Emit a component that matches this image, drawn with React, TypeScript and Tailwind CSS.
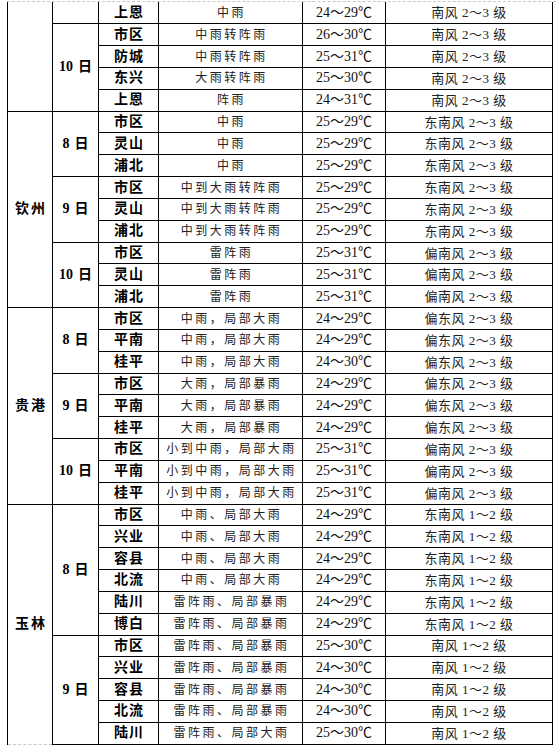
import React from "react"

type Row = [string, string, string, string]
type Day = { date: string; rows: Row[] }
type City = { name: string; days: Day[]; last?: boolean }

const wind23 = (d: string) => `${d}风 2～3 级`
const wind12 = (d: string) => `${d}风 1～2 级`

const cities: City[] = [
  {
    name: "",
    days: [
      { date: "", rows: [["上恩", "中雨", "24～29℃", wind23("南")]] },
      {
        date: "10",
        rows: [
          ["市区", "中雨转阵雨", "26～30℃", wind23("南")],
          ["防城", "中雨转阵雨", "25～31℃", wind23("南")],
          ["东兴", "大雨转阵雨", "25～30℃", wind23("南")],
          ["上恩", "阵雨", "24～31℃", wind23("南")],
        ],
      },
    ],
  },
  {
    name: "钦州",
    days: [
      {
        date: "8",
        rows: [
          ["市区", "中雨", "25～29℃", wind23("东南")],
          ["灵山", "中雨", "25～29℃", wind23("东南")],
          ["浦北", "中雨", "25～29℃", wind23("东南")],
        ],
      },
      {
        date: "9",
        rows: [
          ["市区", "中到大雨转阵雨", "25～29℃", wind23("东南")],
          ["灵山", "中到大雨转阵雨", "25～29℃", wind23("东南")],
          ["浦北", "中到大雨转阵雨", "25～29℃", wind23("东南")],
        ],
      },
      {
        date: "10",
        rows: [
          ["市区", "雷阵雨", "25～31℃", wind23("偏南")],
          ["灵山", "雷阵雨", "25～31℃", wind23("偏南")],
          ["浦北", "雷阵雨", "25～31℃", wind23("偏南")],
        ],
      },
    ],
  },
  {
    name: "贵港",
    days: [
      {
        date: "8",
        rows: [
          ["市区", "中雨，局部大雨", "24～29℃", wind23("偏东")],
          ["平南", "中雨，局部大雨", "24～29℃", wind23("偏东")],
          ["桂平", "中雨，局部大雨", "24～30℃", wind23("偏东")],
        ],
      },
      {
        date: "9",
        rows: [
          ["市区", "大雨，局部暴雨", "24～29℃", wind23("偏东")],
          ["平南", "大雨，局部暴雨", "24～29℃", wind23("偏东")],
          ["桂平", "大雨，局部暴雨", "24～29℃", wind23("偏东")],
        ],
      },
      {
        date: "10",
        rows: [
          ["市区", "小到中雨，局部大雨", "25～31℃", wind23("偏南")],
          ["平南", "小到中雨，局部大雨", "25～31℃", wind23("偏南")],
          ["桂平", "小到中雨，局部大雨", "25～31℃", wind23("偏南")],
        ],
      },
    ],
  },
  {
    name: "玉林",
    last: true,
    days: [
      {
        date: "8",
        rows: [
          ["市区", "中雨、局部大雨", "24～29℃", wind12("东南")],
          ["兴业", "中雨、局部大雨", "24～29℃", wind12("东南")],
          ["容县", "中雨、局部大雨", "24～29℃", wind12("东南")],
          ["北流", "中雨、局部大雨", "24～29℃", wind12("东南")],
          ["陆川", "雷阵雨、局部暴雨", "24～29℃", wind12("东南")],
          ["博白", "雷阵雨、局部暴雨", "24～29℃", wind12("东南")],
        ],
      },
      {
        date: "9",
        rows: [
          ["市区", "雷阵雨、局部暴雨", "25～30℃", wind12("南")],
          ["兴业", "雷阵雨、局部暴雨", "24～30℃", wind12("南")],
          ["容县", "雷阵雨、局部暴雨", "24～30℃", wind12("南")],
          ["北流", "雷阵雨、局部暴雨", "24～30℃", wind12("南")],
          ["陆川", "雷阵雨、局部大雨", "25～30℃", wind12("南")],
        ],
      },
    ],
  },
]

const cell = "border border-black p-0 text-center align-middle leading-none"
const bold = "font-bold text-[14px] text-black"

export default function App() {
  let first = true
  const trs: React.ReactNode[] = []

  cities.forEach((city, ci) => {
    const total = city.days.reduce((n, d) => n + d.rows.length, 0)
    city.days.forEach((day, di) => {
      day.rows.forEach((r, ri) => {
        const top = first ? "border-t-0" : ""
        trs.push(
          <tr key={`${ci}-${di}-${ri}`} className="h-[21.83px]">
            {di === 0 && ri === 0 && (
              <td
                rowSpan={total}
                className={`${cell} ${bold} ${top} tracking-[2px] pl-[2px] ${
                  city.last ? "border-b-[#c8c8c8] [border-bottom-style:dashed]" : ""
                }`}
              >
                {city.name}
              </td>
            )}
            {ri === 0 && (
              <td rowSpan={day.rows.length} className={`${cell} ${bold} ${top}`}>
                {day.date && (
                  <>
                    <span>{day.date}</span>
                    <span className="ml-[5px]">日</span>
                  </>
                )}
              </td>
            )}
            <td className={`${cell} ${bold} ${top} tracking-[1px] pl-[1px]`}>{r[0]}</td>
            <td className={`${cell} ${top} text-[12px] tracking-[2.5px] pl-[2px] text-[#222]`}>{r[1]}</td>
            <td className={`${cell} ${top} text-[14px] text-[#111]`}>{r[2]}</td>
            <td className={`${cell} ${top} text-[13px] tracking-[0.5px] text-[#222]`}>{r[3]}</td>
          </tr>
        )
        first = false
      })
    })
  })

  return (
    <div className="w-[560px] h-[747px] bg-white overflow-hidden font-['Liberation_Serif','Noto_Sans_CJK_SC',serif]">
      <div className="ml-[7px] mt-[1px] w-[549px] border-t border-dashed border-[#c8c8c8]" />
      <table className="ml-[7px] w-[545px] table-fixed border-collapse">
        <colgroup>
          <col className="w-[45px]" />
          <col className="w-[46px]" />
          <col className="w-[60px]" />
          <col className="w-[144px]" />
          <col className="w-[83px]" />
          <col className="w-[167px]" />
        </colgroup>
        <tbody>{trs}</tbody>
      </table>
    </div>
  )
}
